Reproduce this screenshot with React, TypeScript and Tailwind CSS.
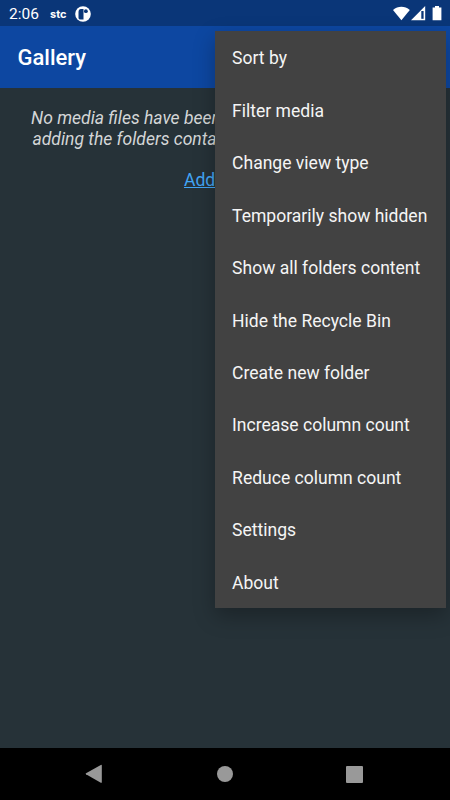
const menuItems = [
  "Sort by",
  "Filter media",
  "Change view type",
  "Temporarily show hidden",
  "Show all folders content",
  "Hide the Recycle Bin",
  "Create new folder",
  "Increase column count",
  "Reduce column count",
  "Settings",
  "About",
];

function StatusBar() {
  return (
    <header className="flex h-[26px] items-center bg-[#0a3678] pl-[9px] pr-[8px] text-white">
      <span className="mt-[3px] w-[41px] text-[15.5px] leading-none">2:06</span>
      <span className="mt-[2px] w-[25px] font-['Inter'] text-[11px] font-bold leading-none">stc</span>
      <svg className="mt-px" width="16" height="16" viewBox="0 0 16 16">
        <circle cx="8" cy="8" r="7.8" fill="white" />
        <path d="M3.500 12V6Q3.500 3 6 3H8.500V13.500H5.500Q3.500 13.500 3.500 12z" fill="#0a3678" />
        <circle cx="10.900" cy="5.200" r="1.900" fill="#0a3678" />
      </svg>
      <div className="ml-auto mt-[2px] flex items-center">
        <svg width="49" height="16" viewBox="0 0 49 16" fill="white">
          <path d="M0 4C5-.2 11.800-.2 16.800 4L8.400 14.300z" />
          <path d="M32.200 0v14.300H18z" />
          <path d="M28.300 5h2.300v7.800h-2.300z" fill="#0a3678" />
          <path d="M42 0h4v1.500h2.400v12.800h-8.800V1.500H42z" />
        </svg>
      </div>
    </header>
  );
}

function OverflowMenu() {
  return (
    <ul className="absolute left-[214.700px] top-[31px] h-[577px] w-[231px] bg-[#424242] shadow-[0_8px_20px_rgba(0,0,0,0.28)]">
      {menuItems.map((item) => (
        <li key={item} className="flex h-[52.480px] items-center whitespace-nowrap pl-[17.400px] pt-[2.200px] text-[17.540px] text-[#f5f5f5]">
          {item}
        </li>
      ))}
    </ul>
  );
}

function NavigationBar() {
  return (
    <nav className="flex h-[52px] items-center justify-between bg-black pl-[85px] pr-[87px]">
      <svg width="18" height="20" viewBox="0 0 18 20" fill="#999">
        <path d="M1 9.300 15.800.9q1-.5 1 .5v16.800q0 1-1 .5L1 10.300q-.8-.5 0-1z" />
      </svg>
      <svg width="16" height="16" viewBox="0 0 16 16" fill="#999">
        <circle cx="8" cy="8" r="8" />
      </svg>
      <svg width="17" height="17" viewBox="0 0 17 17" fill="#999">
        <rect width="17" height="17" rx="1" />
      </svg>
    </nav>
  );
}

export default function App() {
  return (
    <div className="relative flex h-[800px] w-[450px] flex-col overflow-hidden bg-[#263238] font-['Roboto',sans-serif]">
      <StatusBar />
      <div className="flex h-[62px] items-center bg-[#0d47a1] pl-[17.500px]">
        <h1 className="pt-px text-[22px] font-medium text-white">Gallery</h1>
      </div>
      <main className="flex-1 pt-[20px] text-center text-[17.540px]">
        <p className="whitespace-nowrap text-left italic leading-[21px] text-[#d4d6d7]">
          <span className="block pl-[31px]">No media files have been found. You can try</span>
          <span className="block pl-[32.500px]">adding the folders containing media manually.</span>
        </p>
        <a className="mr-px mt-[20px] block leading-[21px] text-[#42a5f5] underline">Add folder</a>
      </main>
      <NavigationBar />
      <OverflowMenu />
    </div>
  );
}
